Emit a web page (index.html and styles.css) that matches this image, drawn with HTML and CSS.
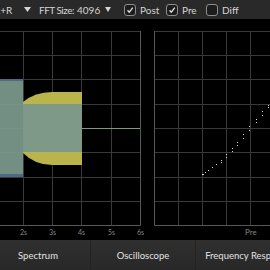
FILE: index.html
```html
<!DOCTYPE html>
<html lang="en">
<head>
    <meta charset="UTF-8">
    <meta name="viewport" content="width=device-width, initial-scale=1.0">
    <title>Analyzer</title>
    <link rel="stylesheet" href="styles.css">
</head>
<body>
<div class="toolbar">
    <div class="select channel">
        <span>L+R</span>
        <svg class="arrow" width="7" height="5" viewBox="0 0 7 5"><path d="M0 0H7L3.5 5Z"/></svg>
    </div>
    <span class="field-label">FFT Size:</span>
    <div class="select fft">
        <span>4096</span>
        <svg class="arrow" width="6" height="5" viewBox="0 0 6 5"><path d="M0 0H6L3 5Z"/></svg>
    </div>
    <label class="check post">
        <span class="box"><svg width="10" height="10" viewBox="0 0 10 10"><path d="M2.5 5.2L4.3 7.2L7.8 2.6"/></svg></span>
        Post
    </label>
    <label class="check pre">
        <span class="box"><svg width="10" height="10" viewBox="0 0 10 10"><path d="M2.5 5.2L4.3 7.2L7.8 2.6"/></svg></span>
        Pre
    </label>
    <label class="check diff">
        <span class="box"></span>
        Diff
    </label>
</div>

<div class="scopes">
    <!-- spectrogram / level view -->
    <svg class="scope left-scope" width="147" height="220" viewBox="0 0 147 220">
        <g class="grid">
            <path d="M0 12.5H140M0 36.5H140M0 60.5H140M0 85.5H140M0 109.5H140M0 133.5H140M0 158.5H140M0 182.5H140"/>
            <path d="M23.5 12V206M52.5 12V206M81.5 12V206M111.5 12V206"/>
        </g>
        <path class="yellow" d="M23 83Q35 73 52 73H82V146H52Q35 146 23 134Z"/>
        <rect class="teal" x="23" y="85" width="59" height="48"/>
        <rect class="teal" x="0" y="60" width="23" height="98"/>
        <rect class="blue" x="0" y="60" width="23" height="2"/>
        <rect class="blue" x="0" y="155" width="23" height="3"/>
        <path class="level" d="M82 109.5H140"/>
        <path class="frame" d="M140.5 12V206.5H0"/>
        <g class="axis-label">
            <text x="23.5" y="216">2s</text>
            <text x="52.5" y="216">3s</text>
            <text x="81.5" y="216">4s</text>
            <text x="111.5" y="216">5s</text>
            <text x="140.5" y="216">6s</text>
        </g>
    </svg>

    <!-- pre/post scatter -->
    <svg class="scope right-scope" width="123" height="220" viewBox="0 0 123 220">
        <g class="grid">
            <path d="M7 12.5H123M7 36.5H123M7 60.5H123M7 85.5H123M7 109.5H123M7 133.5H123M7 158.5H123M7 182.5H123"/>
            <path d="M31.5 12V206M55.5 12V206M79.5 12V206M103.5 12V206"/>
        </g>
        <path class="frame" d="M7.5 12V206.5H123"/>
        <g class="dots">
            <rect x="121" y="86" width="1" height="1"/><rect x="121" y="88" width="1" height="1"/>
            <rect x="115" y="92" width="1" height="1"/><rect x="115" y="96" width="1" height="1"/>
            <rect x="109" y="100" width="1" height="1"/><rect x="109" y="103" width="1" height="1"/>
            <rect x="102" y="107" width="1" height="1"/><rect x="102" y="111" width="1" height="1"/>
            <rect x="96" y="115" width="1" height="1"/><rect x="96" y="119" width="1" height="1"/>
            <rect x="90" y="123" width="1" height="1"/><rect x="90" y="126" width="1" height="1"/>
            <rect x="85" y="129" width="1" height="1"/><rect x="85" y="132" width="1" height="1"/>
            <rect x="79" y="135" width="1" height="1"/><rect x="79" y="138" width="1" height="1"/>
            <rect x="74" y="141" width="1" height="1"/><rect x="74" y="143" width="1" height="1"/>
            <rect x="69" y="145" width="1" height="1"/><rect x="65" y="148" width="1" height="1"/>
            <rect x="61" y="151" width="1" height="1"/><rect x="58" y="153" width="1" height="1"/>
            <rect x="55" y="155" width="2" height="1"/>
        </g>
        <text class="axis-label" x="98" y="216">Pre</text>
    </svg>
</div>

<div class="tabs">
    <div class="tab">Spectrum</div>
    <div class="tab">Oscilloscope</div>
    <div class="tab">Frequency Response</div>
</div>
</body>
</html>
```

FILE: styles.css
```css
:root {
    --bar-bg: #292929;
    --text: #d4d4d4;
    --grid: #393939;
    --frame: #575757;
    --teal: #7a978b;
    --yellow: #b9b44b;
}
html, body {
    margin: 0;
    padding: 0;
}
body {
    width: 270px;
    height: 270px;
    overflow: hidden;
    background: #000;
    color: var(--text);
    font-family: 'Lato', 'Liberation Sans', sans-serif;
}
.toolbar {
    display: flex;
    align-items: center;
    height: 19px;
    background: var(--bar-bg);
    font-size: 10px;
    white-space: nowrap;
}
.select {
    display: flex;
    align-items: center;
    justify-content: space-between;
    flex: none;
}
.select .arrow {
    fill: var(--text);
}
.channel {
    width: 36px;
    margin-left: -5px;
}
.field-label {
    flex: none;
    width: 38px;
    margin-left: 8px;
    letter-spacing: -0.5px;
}
.fft {
    width: 34px;
}
.check {
    display: flex;
    align-items: center;
    gap: 4px;
    flex: none;
}
.post {
    width: 42px;
    margin-left: 13px;
}
.pre {
    width: 40px;
}
.box {
    display: flex;
    align-items: center;
    justify-content: center;
    width: 10px;
    height: 10px;
    border: 1px solid #8e8e8e;
    border-radius: 3px;
    background: #1c1c1c;
}
.box path {
    fill: none;
    stroke: #e0e0e0;
    stroke-width: 1.3;
}
.scopes {
    display: flex;
    height: 220px;
}
.scope {
    display: block;
    flex: none;
}
.grid path {
    stroke: var(--grid);
    stroke-width: 1;
    fill: none;
}
.frame {
    stroke: var(--frame);
    fill: none;
}
.yellow {
    fill: var(--yellow);
}
.teal {
    fill: var(--teal);
    opacity: 0.94;
}
.blue {
    fill: #4e6a84;
}
.level {
    stroke: #7d9a7c;
    fill: none;
}
.axis-label text, text.axis-label {
    font-family: 'Lato', 'Liberation Sans', sans-serif;
    font-size: 7px;
    fill: #858585;
}
.axis-label text {
    text-anchor: middle;
}
text.axis-label {
    font-size: 8px;
}
.dots rect {
    fill: #d8d8d8;
}
.tabs {
    display: flex;
    height: 30px;
    margin-top: 1px;
    margin-left: -15px;
    background: linear-gradient(#303030, #282828);
}
.tab {
    flex: none;
    width: 105px;
    display: flex;
    align-items: center;
    justify-content: center;
    font-size: 9.5px;
    color: #e2e2e2;
    border-left: 1px solid #232323;
    box-sizing: border-box;
}
```
